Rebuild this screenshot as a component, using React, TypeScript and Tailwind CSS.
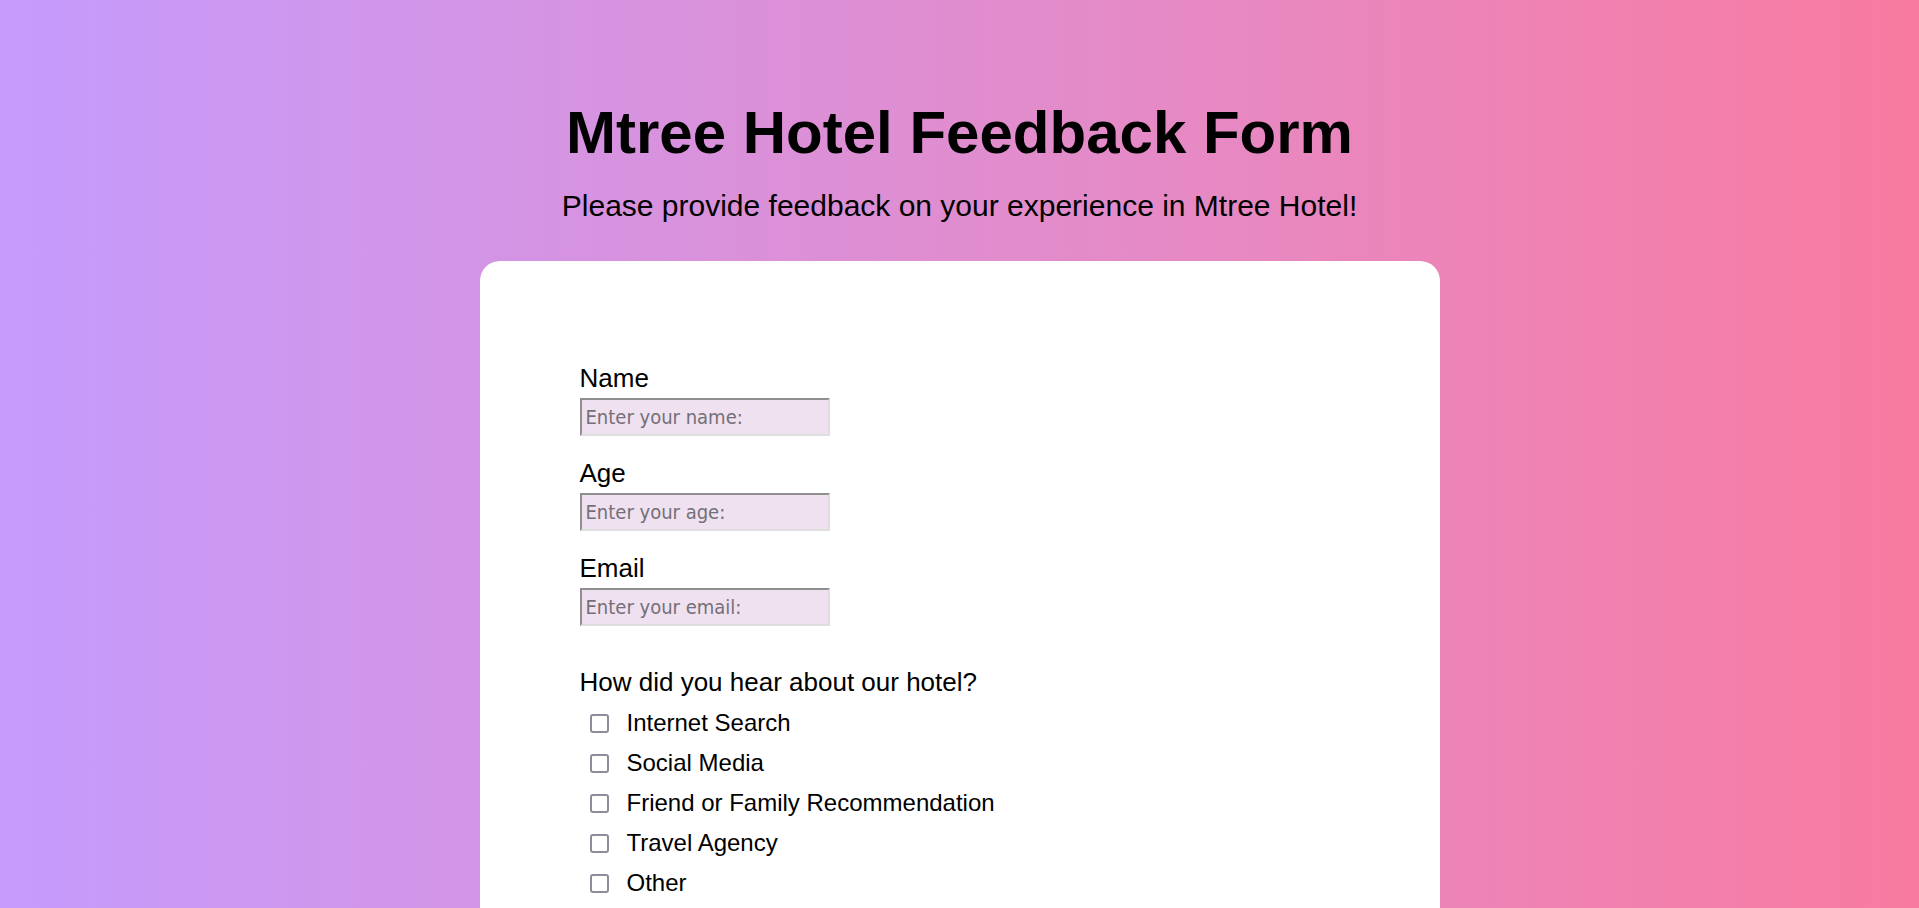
import { useState } from 'react'
import type { FC } from 'react'

const sources = [
  'Internet Search',
  'Social Media',
  'Friend or Family Recommendation',
  'Travel Agency',
  'Other',
]

const ratings = ['Excellent', 'Good', 'Average', 'Poor', 'Very Poor']

const fields = [
  { id: 'name', label: 'Name', placeholder: 'Enter your name:', type: 'text' },
  { id: 'age', label: 'Age', placeholder: 'Enter your age:', type: 'number' },
  { id: 'email', label: 'Email', placeholder: 'Enter your email:', type: 'email' },
]

const TextField: FC<{ id: string; label: string; placeholder: string; type: string }> = ({
  id,
  label,
  placeholder,
  type,
}) => (
  <div className="flex flex-col">
    <label htmlFor={id} className="text-[26px] leading-[30px]">
      {label}
    </label>
    <input
      id={id}
      type={type}
      placeholder={placeholder}
      className="mt-[5px] h-[38px] w-[250px] appearance-none border-2 border-t-[#8f8f8f] border-l-[#8f8f8f] border-r-[#dedede] border-b-[#dedede] bg-[#efe1ef] px-[4px] font-['DejaVu_Sans_Condensed','DejaVu_Sans',Tahoma,sans-serif] text-[20px] [font-stretch:condensed] placeholder:text-[#737079] focus:outline-none"
    />
  </div>
)

const CheckRow: FC<{ label: string; type?: 'checkbox' | 'radio'; name: string }> = ({
  label,
  type = 'checkbox',
  name,
}) => {
  const [checked, setChecked] = useState(false)
  return (
    <label className="flex h-[28px] items-center">
      <input
        type={type}
        name={name}
        checked={checked}
        onChange={() => setChecked(!checked)}
        className="ml-[10px] h-[19px] w-[19px] appearance-none rounded-[3px] border-2 border-[#8e8c9a] bg-white checked:bg-[#0075ff]"
      />
      <span className="ml-[18px] text-[24px] leading-[28px]">{label}</span>
    </label>
  )
}

export default function App() {
  return (
    <div className="min-h-screen bg-linear-to-r from-[#c59bfd] to-[#f87aa0] pb-[120px] font-['Liberation_Sans',Arial,sans-serif] text-black">
      <header className="pt-[98px] text-center">
        <h1 className="text-[60px] font-bold leading-[69px]">Mtree Hotel Feedback Form</h1>
        <p className="mt-[22px] text-[30px] leading-[34px]">
          Please provide feedback on your experience in Mtree Hotel!
        </p>
      </header>

      <main className="mx-auto mt-[38px] w-[960px] rounded-[20px] bg-white px-[100px] pt-[102px] pb-[100px]">
        <form className="flex flex-col" onSubmit={(e) => e.preventDefault()}>
          <div className="flex flex-col gap-[22px]">
            {fields.map((f) => (
              <TextField key={f.id} {...f} />
            ))}
          </div>

          <fieldset className="mt-[41px] flex flex-col">
            <legend className="text-[26px] leading-[30px]">How did you hear about our hotel?</legend>
            <div className="mt-[12px] flex flex-col gap-[12px]">
              {sources.map((s) => (
                <CheckRow key={s} label={s} name="source" />
              ))}
            </div>
          </fieldset>

          <fieldset className="mt-[40px] flex flex-col">
            <legend className="text-[26px] leading-[30px]">How would you rate your overall stay?</legend>
            <div className="mt-[12px] flex flex-col gap-[12px]">
              {ratings.map((r) => (
                <CheckRow key={r} label={r} name="rating" type="radio" />
              ))}
            </div>
          </fieldset>

          <div className="mt-[40px] flex flex-col">
            <label htmlFor="comments" className="text-[26px] leading-[30px]">
              Additional comments
            </label>
            <textarea
              id="comments"
              placeholder="Tell us more about your stay:"
              className="mt-[5px] h-[150px] w-[500px] resize-none border-2 border-t-[#8f8f8f] border-l-[#8f8f8f] border-r-[#dedede] border-b-[#dedede] bg-[#efe1ef] p-[4px] font-['DejaVu_Sans_Condensed','DejaVu_Sans',Tahoma,sans-serif] text-[20px] [font-stretch:condensed] placeholder:text-[#737079] focus:outline-none"
            />
          </div>

          <button
            type="submit"
            className="mt-[40px] h-[50px] w-[160px] rounded-[10px] bg-[#f87aa0] text-[24px] text-white"
          >
            Submit
          </button>
        </form>
      </main>
    </div>
  )
}
